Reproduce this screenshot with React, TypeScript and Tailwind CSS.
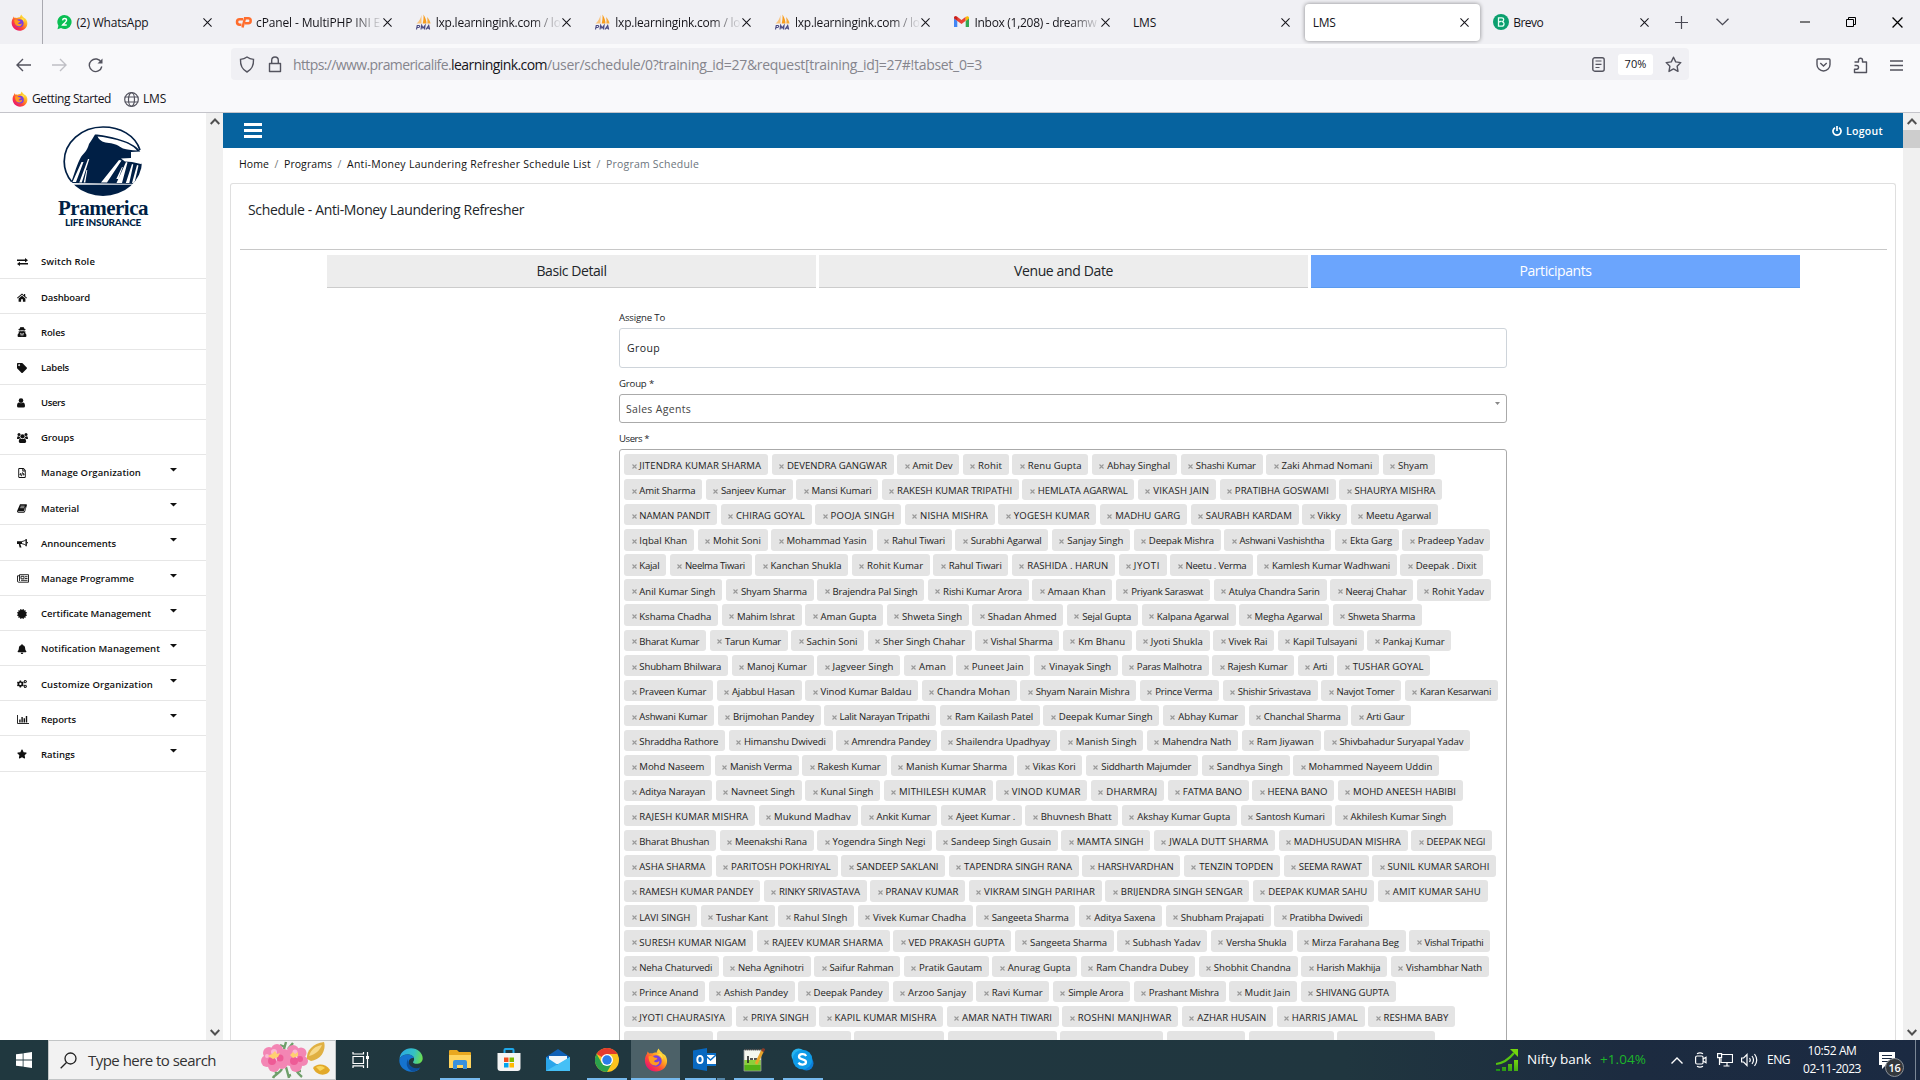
import React, { useLayoutEffect, useRef, useState } from "react";
import { FaUserSecret, FaTag, FaRegFileCode, FaCertificate, FaBell, FaCogs, FaStar } from "react-icons/fa";

/** Single line of text whose tracking is adjusted so that it spans exactly `w` pixels. */
function Fit({ w, children, className = "" }: { w: number; children: string; className?: string }) {
  const ref = useRef<HTMLSpanElement>(null);
  const [ls, setLs] = useState(0);
  useLayoutEffect(() => {
    if (ref.current) setLs((w - ref.current.getBoundingClientRect().width) / children.length);
  }, [w, children]);
  return (
    <span ref={ref} className={`inline-block shrink-0 whitespace-pre ${className}`} style={{ letterSpacing: `${ls}px` }}>
      {children}
    </span>
  );
}

const Firefox = ({ s }: { s: number }) => (
  <svg width={s} height={s} viewBox="0 0 24 24" className="shrink-0">
    <defs>
      <linearGradient id="ffBody" x1="0.85" y1="0.1" x2="0.15" y2="0.9">
        <stop offset="0" stopColor="#fff14a" /><stop offset="0.35" stopColor="#ffa21f" />
        <stop offset="0.65" stopColor="#ff4a37" /><stop offset="1" stopColor="#e81272" />
      </linearGradient>
    </defs>
    <path d="M14.6 0.6c1 2.2 2.6 3.2 4.2 5.1 0.9 0.3 1.8 0.9 2.4 1.6 1.6 2.4 2.1 4.4 1.8 7C22.300 20 17.600 23.500 12 23.500 5.700 23.500 0.900 18.600 0.900 12.500c0-2.700 0.700-5 2.100-6.800l0.600-2.200c0.700 0.500 1.200 1.200 1.500 2 1-0.300 2-0.300 3 0 2.400-1.200 4-1 4.600-0.800 0.200-1.500 0.900-3 1.900-4.100z" fill="url(#ffBody)" />
    <circle cx="12" cy="13" r="5.700" fill="#7a3fe0" />
    <path d="M4.500 8.500c2.500-0.900 4.500-0.500 5.900 0.900 1.300 0.200 3 0.200 3 1.300-0.900 1.400-2.800 1-3.300 2.800 1 1.500 3.700 0.600 5.200-0.600 0.200 3.200-2.400 4.900-5.200 4.400C6.500 16.800 4.600 13 4.500 8.500z" fill="#ff9a20" />
    <path d="M12.500 6.200c3 0.400 5.400 2.600 6 5.600 0.500-2.200-0.200-4.600-1.800-6.100z" fill="#ffe04a" />
  </svg>
);

const WhatsApp = () => (
  <svg width="15" height="16" viewBox="0 0 16 16" className="shrink-0">
    <path d="M8 0.500a7.500 7.500 0 1 1-3.700 14L0.500 15.600l1-3.700A7.500 7.500 0 0 1 8 0.500z" fill="#0abf53" />
    <path d="M5.900 6.200c0.200-1.300 1.200-1.900 2.200-1.900 1.300 0 2.100 0.800 2.100 1.900 0 1.800-2.500 2.500-4.200 5h4.400" fill="none" stroke="#fff" strokeWidth="1.500" />
  </svg>
);

const CPanel = () => (
  <svg width="17" height="12" viewBox="0 0 17 12" className="shrink-0">
    <path d="M8 3.300H4.700a2.700 2.700 0 0 0 0 5.400H6.500" fill="none" stroke="#ff6c2c" strokeWidth="2.500" />
    <path d="M7.500 11.500L10 2.200h3.200a2.400 2.400 0 0 1 0 5H10" fill="none" stroke="#ff6c2c" strokeWidth="2.500" />
  </svg>
);

const Pma = () => (
  <svg width="17" height="16" viewBox="0 0 17 16" className="shrink-0">
    <path d="M6.500 1v8.500H1.500C4 7.500 5.500 5 6.500 1z" fill="#f9c27a" />
    <path d="M8.500 0.500c1.800 2.800 3 6 3 9H7.700c0.800-3 1-6 0.800-9z" fill="#f89c1c" />
    <path d="M12 3c2 2 3.200 4.200 3.500 6.500h-3.200C12.600 7.400 12.500 5 12 3z" fill="#f5a93c" />
    <path d="M1.500 15.500 2.300 11.500h1.600c1.300 0 1 2-0.500 2H2M6 15.500l0.700-4 1.300 2.600 2-2.600-0.500 4M11 15.500l2.700-4 0.900 4M12 14.200h2.300" fill="none" stroke="#4a4a82" strokeWidth="1.200" />
  </svg>
);

const Gmail = () => (
  <svg width="15" height="12" viewBox="0 0 15 12" className="shrink-0">
    <path d="M0 1.500V11h3.300V5z" fill="#4285f4" />
    <path d="M15 1.500V11h-3.300V5z" fill="#34a853" />
    <path d="M0 1.800C0 0.300 1.800-0.300 3.200 0.800L7.500 4l4.200-3.200v3.900L7.500 8 0 2.500z" fill="#ea4335" />
    <path d="M11.700 0.900C13-0.300 15 0.200 15 1.800L14.900 2.600l-3.200 2.300z" fill="#fbbc04" />
    <path d="M0 1.900 3.300 4.500V0.900C1.800-0.200 0 0.300 0 1.900z" fill="#c5221f" />
  </svg>
);

const Brevo = () => (
  <svg width="16" height="16" viewBox="0 0 16 16" className="shrink-0">
    <circle cx="8" cy="8" r="8" fill="#0b9f6e" />
    <path d="M5.500 3.800h3.300c2.500 0 2.500 3.600 0 3.800 3 0 3 4.600-0.300 4.600H5.500zM5.500 8.200l3-1" fill="none" stroke="#e8fff5" strokeWidth="1.300" />
  </svg>
);

const Cross = ({ s = 9, c = "#15141a" }: { s?: number; c?: string }) => (
  <svg width={s} height={s} viewBox="0 0 10 10" className="shrink-0"><path d="M0.500 0.500l9 9M9.500 0.500l-9 9" stroke={c} strokeWidth="1.150" /></svg>
);

const tabs: { icon?: React.ReactNode; text: string; w: number; fade?: boolean; active?: boolean }[] = [
  { icon: <WhatsApp />, text: "(2) WhatsApp", w: 72 },
  { icon: <CPanel />, text: "cPanel - MultiPHP INI E", w: 124, fade: true },
  { icon: <Pma />, text: "lxp.learningink.com / lo", w: 125, fade: true },
  { icon: <Pma />, text: "lxp.learningink.com / lo", w: 125, fade: true },
  { icon: <Pma />, text: "lxp.learningink.com / lo", w: 125, fade: true },
  { icon: <Gmail />, text: "Inbox (1,208) - dreamw", w: 122, fade: true },
  { text: "LMS", w: 23 },
  { text: "LMS", w: 23, active: true },
  { icon: <Brevo />, text: "Brevo", w: 30 },
];

function TabBar() {
  return (
    <div className="flex h-[44px] items-center bg-[#f0f0f4] text-[12px] text-[#15141a]">
      <div className="flex h-full w-[43px] items-center justify-center border-r border-[#a9a9b0] pr-[4px]"><Firefox s={17} /></div>
      <div className="ml-[2.500px] flex h-full">
        {tabs.map((t, i) => (
          <div key={i} className="flex h-full w-[179.600px] items-center px-[2px]">
            <div className={t.active ? "flex h-[37px] w-full items-center rounded-[4px] bg-white pl-[8px] pr-[11px] shadow-[0_0_4px_rgba(0,0,0,0.45)]" : "flex h-[37px] w-full items-center pl-[8px] pr-[11px]"}>
              {t.icon && <span className="mr-[4px] flex w-[17px] shrink-0 items-center justify-center">{t.icon}</span>}
              <span className={t.fade ? "flex min-w-0 flex-1 overflow-hidden pt-px [mask-image:linear-gradient(to_right,black_75%,transparent_100%)]" : "flex min-w-0 flex-1 pt-px"}>
                <Fit w={t.w}>{t.text}</Fit>
              </span>
              <Cross />
            </div>
          </div>
        ))}
      </div>
      <svg width="13" height="13" viewBox="0 0 13 13" className="ml-[13.500px]"><path d="M6.500 0v13M0 6.500h13" stroke="#4a4a55" strokeWidth="1.200" /></svg>
      <svg width="13" height="8" viewBox="0 0 13 8" className="ml-[28px]"><path d="M0.500 0.700l6 6 6-6" fill="none" stroke="#4a4a55" strokeWidth="1.300" /></svg>
      <div className="ml-auto flex items-center pr-[17px]">
        <svg width="10" height="10" viewBox="0 0 10 10"><path d="M0 5h10" stroke="#000" /></svg>
        <svg width="11" height="11" viewBox="0 0 11 11" className="ml-[36px]"><path d="M0.500 2.500h7v7h-7zM2.500 2.500v-2h7v7h-2" fill="none" stroke="#000" /></svg>
        <span className="ml-[35px] flex"><Cross s={11} c="#000" /></span>
      </div>
    </div>
  );
}

const line = { fill: "none", stroke: "#53535e", strokeWidth: 1.4 } as const;

function Toolbar() {
  return (
    <div className="flex h-[42px] items-center bg-[#f9f9fb]">
      <svg width="15" height="14" viewBox="0 0 15 14" className="ml-[16px]"><path d="M15 7H1M7 1L1 7l6 6" {...line} /></svg>
      <svg width="15" height="14" viewBox="0 0 15 14" className="ml-[21px]"><path d="M0 7h14M8 1l6 6-6 6" {...line} stroke="#bfbfc5" /></svg>
      <svg width="15" height="15" viewBox="0 0 15 15" className="ml-[21px]"><path d="M13.300 4.500A6.300 6.300 0 1 0 13.800 8.500" {...line} /><path d="M14.500 0.500v5h-5z" fill="#53535e" /></svg>
      <div className="mb-[6px] ml-[128px] flex h-[32px] w-[1458px] items-center self-end rounded-[4px] bg-[#f0f0f4]">
        <svg width="16" height="17" viewBox="0 0 16 17" className="ml-[8px]"><path d="M8 1c2 1.500 4 2.200 6.500 2.400C14.800 9 13 13.500 8 16 3 13.500 1.200 9 1.500 3.400 4 3.200 6 2.500 8 1z" {...line} /></svg>
        <svg width="14" height="17" viewBox="0 0 14 17" className="ml-[13px]"><path d="M1.500 7.500h11v8h-11zM3.700 7.500V4.300a3.300 3.300 0 0 1 6.600 0v3.200" {...line} strokeLinejoin="round" /></svg>
        <div className="ml-[11px] flex pt-px text-[14px] text-[#85858d]">
          <Fit w={158}>https://www.pramericalife.</Fit>
          <Fit w={96} className="text-[#15141a]">learningink.com</Fit>
          <Fit w={435}>/user/schedule/0?training_id=27&request[training_id]=27#!tabset_0=3</Fit>
        </div>
        <div className="ml-auto mr-[7px] flex items-center">
          <svg width="13" height="15" viewBox="0 0 13 15"><rect x="0.800" y="0.800" width="11.400" height="13.400" rx="2" {...line} /><path d="M3.500 4h6M3.500 7.300h6M3.500 10.500h4" {...line} strokeWidth="1.200" /></svg>
          <div className="ml-[13px] flex h-[21px] w-[35px] items-center justify-center rounded-[3px] bg-white text-[11px] text-[#15141a]"><Fit w={22}>70%</Fit></div>
          <svg width="17" height="17" viewBox="0 0 17 17" className="ml-[12px]"><path d="M8.500 1.200l2.200 4.700 5.100 0.700-3.700 3.600 0.900 5.200-4.500-2.500L4 15.400l0.900-5.200L1.200 6.600l5.100-0.700z" {...line} strokeLinejoin="round" /></svg>
        </div>
      </div>
      <div className="ml-auto flex items-center pr-[17px]">
        <svg width="15" height="14" viewBox="0 0 15 14"><path d="M2 1h11q1 0 1 1v4.500a6.500 6.500 0 0 1-13 0V2q0-1 1-1zM4.300 5l3.200 3 3.200-3" {...line} /></svg>
        <svg width="15" height="17" viewBox="0 0 15 17" className="ml-[22px]"><path d="M1.500 5h4V3.200a2 2 0 0 1 4 0V5h4v10.500H1.500v-3.300h2.200a1.800 1.800 0 0 0 0-3.700H1.500" {...line} strokeLinejoin="round" /></svg>
        <svg width="13" height="11" viewBox="0 0 13 11" className="ml-[22px]"><path d="M0 1h13M0 5.500h13M0 10h13" {...line} /></svg>
      </div>
    </div>
  );
}

function Bookmarks() {
  return (
    <div className="flex h-[27px] items-center border-b border-[#c4c4ca] bg-[#f9f9fb] pl-[12px] text-[12px] text-[#15141a]">
      <Firefox s={16} />
      <span className="ml-[4px] flex"><Fit w={79}>Getting Started</Fit></span>
      <svg width="15" height="15" viewBox="0 0 15 15" className="ml-[13px]"><circle cx="7.500" cy="7.500" r="6.800" {...line} strokeWidth="1.200" /><ellipse cx="7.500" cy="7.500" rx="3" ry="6.800" {...line} strokeWidth="1.200" /><path d="M0.700 5h13.600M0.700 10h13.600" {...line} strokeWidth="1.200" /></svg>
      <span className="ml-[4px] flex"><Fit w={23}>LMS</Fit></span>
    </div>
  );
}

const Exchange = () => (
  <svg width="11" height="8" viewBox="0 0 11 8"><path d="M0 1.500h8V0l3 2.200-3 2.300V3H0zM11 5H3V3.800L0 6l3 2V6.500h8z" fill="#111" /></svg>
);
const House = () => (
  <svg width="10" height="9" viewBox="0 0 10 9"><path d="M5 0.500l2 1.700V1h1.200v2.300L10 4.800l-0.600 0.700L5 1.800 0.600 5.500 0 4.800z" fill="#111" /><path d="M5 2.700l3.400 2.800V8.700H5.900V6.200H4.100v2.500H1.600V5.500z" fill="#111" /></svg>
);
const Person = () => (
  <svg width="8" height="10" viewBox="0 0 8 10"><circle cx="4" cy="2.600" r="2.300" fill="#111" /><path d="M0 8C0 5.500 0.900 4.600 2 4.500q2 1.300 4 0C7.100 4.600 8 5.500 8 8q0 1.600-1.500 1.600h-5Q0 9.600 0 8z" fill="#111" /></svg>
);
const People = () => (
  <svg width="11" height="10" viewBox="0 0 11 10" fill="#111"><circle cx="2" cy="1.600" r="1.500" /><circle cx="9" cy="1.600" r="1.500" /><circle cx="5.500" cy="3.300" r="2.100" /><path d="M0 5.600C0 3.800 0.700 3.300 1.300 3.300l1.800 0.600q-0.100 1.200 0.500 1.700H2.200q-0.700 0.500-0.700 0.500H0.700Q0 6.200 0 5.600zM11 5.600C11 3.800 10.300 3.300 9.700 3.300L7.900 3.900q0.100 1.200-0.500 1.700h1.400q0.700 0.500 0.700 0.500h0.800q0.700 0.100 0.700-0.500zM1.800 8.600C1.800 6.300 2.600 5.500 3.600 5.400q1.900 1.200 3.800 0 1.800 0.200 1.800 3.200 0 1.300-1.300 1.300H3.100Q1.800 9.900 1.800 8.600z" /></svg>
);
const BookIcon = () => (
  <svg width="10" height="9" viewBox="0 0 10 9"><path d="M3 0.300h6.300q0.800 0.200 0.600 1L8.300 7q-0.300 1.700-1.500 1.700H1.200Q-0.200 8.400 0.100 7z" fill="#111" /><path d="M3.600 2.200h4M3.200 3.700h4M1.200 7.500h5.500q0.500 0 0.900-1.300l0.700-2.700" stroke="#fff" strokeWidth="0.600" fill="none" /></svg>
);
const Horn = () => (
  <svg width="11" height="9" viewBox="0 0 11 9"><path d="M0 2.200h5V5H3.300L4.500 8.500H2.600L1.800 5H0z" fill="#111" /><path d="M5 2.500q2.300-0.300 4.200-1.800v5.800Q7.300 5 5 4.700" fill="none" stroke="#111" strokeWidth="0.900" /><path d="M9.200 0v7.300M10.400 3v1.300" stroke="#111" strokeWidth="1" /></svg>
);
const News = () => (
  <svg width="12" height="9" viewBox="0 0 12 9"><path d="M2.500 0.700h9v7.500h-10Q0.500 8.200 0.500 7V1.800h2M2.500 0.700V7" fill="none" stroke="#111" strokeWidth="0.900" /><path d="M4 2.300h3v2.500H4zM8 2.700h2.500M8 4.500h2.500M4 6.300h6.500" fill="none" stroke="#111" strokeWidth="0.900" /></svg>
);
const Bars = () => (
  <svg width="12" height="9" viewBox="0 0 12 9"><path d="M0.500 0v8.500H12" fill="none" stroke="#111" strokeWidth="0.900" /><path d="M2.900 4.500v3M5.100 2v5.500M7.300 3.300v4.200M9.500 1v6.500" stroke="#111" strokeWidth="1.400" /></svg>
);

const menu: [React.ReactNode, string, number, boolean][] = [
  [<Exchange />, "Switch Role", 54, false],
  [<House />, "Dashboard", 49, false],
  [<FaUserSecret />, "Roles", 24, false],
  [<FaTag />, "Labels", 28, false],
  [<Person />, "Users", 24, false],
  [<People />, "Groups", 33, false],
  [<FaRegFileCode />, "Manage Organization", 100, true],
  [<BookIcon />, "Material", 38, true],
  [<Horn />, "Announcements", 75, true],
  [<News />, "Manage Programme", 93, true],
  [<FaCertificate />, "Certificate Management", 110, true],
  [<FaBell />, "Notification Management", 119, true],
  [<FaCogs />, "Customize Organization", 112, true],
  [<Bars />, "Reports", 35, true],
  [<FaStar />, "Ratings", 34, true],
];

const Logo = () => (
  <svg width="80" height="71" viewBox="0 0 80 71">
    <defs><clipPath id="rock"><ellipse cx="40" cy="35.500" rx="39" ry="34.500" /></clipPath></defs>
    <path d="M77 24C72 9 57 1 40 1 18.500 1 1.200 16.500 1.200 35.500c0 7.500 2.700 14.500 7.500 20.200" fill="none" stroke="#001f45" strokeWidth="1.700" />
    <g clipPath="url(#rock)">
      <path d="M8 57C12 46 14 38 18 31c3-4 6-6 8-13 2-3 4-6 6-9.500h2c8 1 14 2 20 4 11 3 19 7 23.500 13l-9.500 0.500v7l11 4v21z" fill="#001f45" />
      <rect x="0" y="58.700" width="80" height="14" fill="#001f45" />
      <path d="M34.500 10.500C42 11 48 12.500 54 14c9 2.500 16 5.500 20 10.500-6-0.200-10-0.800-14-2-5-3-8-5-14-5.500-5-0.500-9-1.500-11.500-6.500z" fill="#fff" />
      <path d="M58 32.500l10-0.500 12 4.500v2l-11-2.500-7-0.500z" fill="#fff" />
      <path d="M56 34l2.500 0.500L44 56.500h-6zM63 36l1.500 0.500L59 57h-5.500zM59 41l0.800 0-4.500 12h-2zM69 38l1.300 0.500-4 18.500h-3.500zM74 39l1.500 0.500-4 17.500h-2.500z" fill="#fff" />
      <path d="M18.500 36l2 0L13 56H9.500zM25 33l1.300 0-7.500 23.500h-2.500zM23.500 44l0.800 0-2 12.500h-1.600z" fill="#fff" />
    </g>
  </svg>
);

const Arrow = ({ up = false }: { up?: boolean }) => (
  <svg width="10" height="7" viewBox="0 0 10 7" className="shrink-0"><path d={up ? "M0.700 6l4.300-4.500L9.300 6" : "M0.700 1l4.300 4.500L9.300 1"} fill="none" stroke="#505050" strokeWidth="1.900" /></svg>
);

function Sidebar() {
  return (
    <>
      <div className="flex w-[206px] shrink-0 flex-col bg-white">
        <div className="flex h-[131px] shrink-0 flex-col items-center pt-[13px] text-[#001f45]">
          <Logo />
          <div className="flex h-[19px] items-center pt-[4px] font-['Liberation_Serif'] text-[21px] font-bold leading-none"><Fit w={90}>Pramerica</Fit></div>
          <div className="flex h-[10px] items-center pt-px font-['Lato'] text-[10px] font-black leading-none"><Fit w={76}>LIFE INSURANCE</Fit></div>
        </div>
        {menu.map(([icon, label, w, sub]) => (
          <div key={label} className="flex h-[35.180px] shrink-0 items-center border-b border-[#e6e6e6] pl-[17px] pt-[3px] text-[#111]">
            <span className="flex w-[24px] pb-px text-[10px]">{icon}</span>
            <span className="flex text-[9.500px] font-semibold"><Fit w={w}>{label}</Fit></span>
            {sub && <svg width="7" height="4" viewBox="0 0 7 4" className="mb-[7px] ml-auto mr-[29px]"><path d="M0 0h7L3.500 3.500z" fill="#111" /></svg>}
          </div>
        ))}
      </div>
      <div className="flex w-[17px] shrink-0 flex-col items-center justify-between bg-[#f0f0f0] py-[4.500px]"><Arrow up /><Arrow /></div>
    </>
  );
}

const rows: [string, number][][] = [
  [["JITENDRA KUMAR SHARMA", 144], ["DEVENDRA GANGWAR", 122], ["Amit Dev", 62], ["Rohit", 46], ["Renu Gupta", 76], ["Abhay Singhal", 85], ["Shashi Kumar", 82], ["Zaki Ahmad Nomani", 113], ["Shyam", 52]],
  [["Amit Sharma", 78], ["Sanjeev Kumar", 87], ["Mansi Kumari", 82], ["RAKESH KUMAR TRIPATHI", 137], ["HEMLATA AGARWAL", 112], ["VIKASH JAIN", 78], ["PRATIBHA GOSWAMI", 116], ["SHAURYA MISHRA", 103]],
  [["NAMAN PANDIT", 93], ["CHIRAG GOYAL", 91], ["POOJA SINGH", 86], ["NISHA MISHRA", 90], ["YOGESH KUMAR", 98], ["MADHU GARG", 87], ["SAURABH KARDAM", 108], ["Vikky", 45], ["Meetu Agarwal", 87]],
  [["Iqbal Khan", 70], ["Mohit Soni", 70], ["Mohammad Yasin", 102], ["Rahul Tiwari", 75], ["Surabhi Agarwal", 93], ["Sanjay Singh", 78], ["Deepak Mishra", 87], ["Ashwani Vashishtha", 107], ["Ekta Garg", 64], ["Pradeep Yadav", 88]],
  [["Kajal", 42], ["Neelma Tiwari", 82], ["Kanchan Shukla", 93], ["Rohit Kumar", 78], ["Rahul Tiwari", 75], ["RASHIDA . HARUN", 103], ["JYOTI", 48], ["Neetu . Verma", 83], ["Kamlesh Kumar Wadhwani", 140], ["Deepak . Dixit", 83]],
  [["Anil Kumar Singh", 98], ["Shyam Sharma", 88], ["Brajendra Pal Singh", 107], ["Rishi Kumar Arora", 101], ["Amaan Khan", 80], ["Priyank Saraswat", 94], ["Atulya Chandra Sarin", 113], ["Neeraj Chahar", 83], ["Rohit Yadav", 74]],
  [["Kshama Chadha", 94], ["Mahim Ishrat", 80], ["Aman Gupta", 78], ["Shweta Singh", 82], ["Shadan Ahmed", 91], ["Sejal Gupta", 71], ["Kalpana Agarwal", 94], ["Megha Agarwal", 90], ["Shweta Sharma", 89]],
  [["Bharat Kumar", 82], ["Tarun Kumar", 78], ["Sachin Soni", 73], ["Sher Singh Chahar", 104], ["Vishal Sharma", 84], ["Km Bhanu", 69], ["Jyoti Shukla", 74], ["Vivek Rai", 61], ["Kapil Tulsayani", 86], ["Pankaj Kumar", 84]],
  [["Shubham Bhilwara", 104], ["Manoj Kumar", 82], ["Jagveer Singh", 83], ["Aman", 49], ["Puneet Jain", 74], ["Vinayak Singh", 84], ["Paras Malhotra", 87], ["Rajesh Kumar", 82], ["Arti", 36], ["TUSHAR GOYAL", 93]],
  [["Praveen Kumar", 89], ["Ajabbul Hasan", 85], ["Vinod Kumar Baldau", 113], ["Chandra Mohan", 95], ["Shyam Narain Mishra", 116], ["Prince Verma", 79], ["Shishir Srivastava", 95], ["Navjot Tomer", 80], ["Karan Kesarwani", 93]],
  [["Ashwani Kumar", 90], ["Brijmohan Pandey", 103], ["Lalit Narayan Tripathi", 112], ["Ram Kailash Patel", 100], ["Deepak Kumar Singh", 116], ["Abhay Kumar", 82], ["Chanchal Sharma", 99], ["Arti Gaur", 60]],
  [["Shraddha Rathore", 101], ["Himanshu Dwivedi", 104], ["Amrendra Pandey", 101], ["Shailendra Upadhyay", 116], ["Manish Singh", 83], ["Mahendra Nath", 91], ["Ram Jiyawan", 79], ["Shivbahadur Suryapal Yadav", 146]],
  [["Mohd Naseem", 87], ["Manish Verma", 84], ["Rakesh Kumar", 85], ["Manish Kumar Sharma", 123], ["Vikas Kori", 65], ["Siddharth Majumder", 112], ["Sandhya Singh", 88], ["Mohammed Nayeem Uddin", 146]],
  [["Aditya Narayan", 88], ["Navneet Singh", 86], ["Kunal Singh", 75], ["MITHILESH KUMAR", 109], ["VINOD KUMAR", 91], ["DHARMRAJ", 73], ["FATMA BANO", 81], ["HEENA BANO", 82], ["MOHD ANEESH HABIBI", 125]],
  [["RAJESH KUMAR MISHRA", 131], ["Mukund Madhav", 99], ["Ankit Kumar", 76], ["Ajeet Kumar .", 81], ["Bhuvnesh Bhatt", 93], ["Akshay Kumar Gupta", 115], ["Santosh Kumari", 91], ["Akhilesh Kumar Singh", 118]],
  [["Bharat Bhushan", 92], ["Meenakshi Rana", 94], ["Yogendra Singh Negi", 115], ["Sandeep Singh Gusain", 122], ["MAMTA SINGH", 89], ["JWALA DUTT SHARMA", 121], ["MADHUSUDAN MISHRA", 129], ["DEEPAK NEGI", 81]],
  [["ASHA SHARMA", 88], ["PARITOSH POKHRIYAL", 122], ["SANDEEP SAKLANI", 104], ["TAPENDRA SINGH RANA", 130], ["HARSHVARDHAN", 98], ["TENZIN TOPDEN", 96], ["SEEMA RAWAT", 85], ["SUNIL KUMAR SAROHI", 124]],
  [["RAMESH KUMAR PANDEY", 136], ["RINKY SRIVASTAVA", 103], ["PRANAV KUMAR", 95], ["VIKRAM SINGH PARIHAR", 133], ["BRIJENDRA SINGH SENGAR", 144], ["DEEPAK KUMAR SAHU", 121], ["AMIT KUMAR SAHU", 110]],
  [["LAVI SINGH", 73], ["Tushar Kant", 74], ["Rahul SIngh", 76], ["Vivek Kumar Chadha", 115], ["Sangeeta Sharma", 99], ["Aditya Saxena", 83], ["Shubham Prajapati", 105], ["Pratibha Dwivedi", 95]],
  [["SURESH KUMAR NIGAM", 129], ["RAJEEV KUMAR SHARMA", 133], ["VED PRAKASH GUPTA", 118], ["Sangeeta Sharma", 99], ["Subhash Yadav", 90], ["Versha Shukla", 82], ["Mirza Farahana Beg", 109], ["Vishal Tripathi", 81]],
  [["Neha Chaturvedi", 95], ["Neha Agnihotri", 88], ["Saifur Rahman", 86], ["Pratik Gautam", 85], ["Anurag Gupta", 85], ["Ram Chandra Dubey", 114], ["Shobhit Chandna", 99], ["Harish Makhija", 86], ["Vishambhar Nath", 98]],
  [["Prince Anand", 81], ["Ashish Pandey", 86], ["Deepak Pandey", 91], ["Arzoo Sanjay", 80], ["Ravi Kumar", 73], ["Simple Arora", 77], ["Prashant Mishra", 92], ["Mudit Jain", 68], ["SHIVANG GUPTA", 95]],
  [["JYOTI CHAURASIYA", 108], ["PRIYA SINGH", 80], ["KAPIL KUMAR MISHRA", 124], ["AMAR NATH TIWARI", 112], ["ROSHNI MANJHWAR", 116], ["AZHAR HUSAIN", 91], ["HARRIS JAMAL", 88], ["RESHMA BABY", 87]],
  [["", 89], ["", 134], ["", 90], ["", 109], ["", 103], ["", 78], ["", 85], ["", 98]],
];

function Chip({ name, w }: { name: string; w: number }) {
  return (
    <div className="flex h-[21.300px] shrink-0 items-center rounded-[3px] bg-[#e4e4e4] pl-[7.500px] pt-[2.600px]" style={{ width: w }}>
      {name && (
        <>
          <svg width="5" height="5" viewBox="0 0 5 5" className="mr-[2.800px] mt-px shrink-0"><path d="M0.500 0.500l4 4M4.500 0.500l-4 4" stroke="#999" strokeWidth="1.100" /></svg>
          <span className="flex text-[9.600px] leading-none text-[#222]"><Fit w={w - 22}>{name}</Fit></span>
        </>
      )}
    </div>
  );
}

function Main() {
  return (
    <div className="flex min-w-0 flex-1 flex-col">
      <div className="flex h-[35px] shrink-0 items-center bg-[#06639f] pl-[21px] pr-[20px] text-white">
        <svg width="18" height="15" viewBox="0 0 18 15"><path d="M0 1.500h18M0 7.500h18M0 13.500h18" stroke="#fff" strokeWidth="2.900" /></svg>
        <svg width="10" height="10" viewBox="0 0 10 10" className="ml-auto"><path d="M3 1.700a4 4 0 1 0 4 0M5 0v5" fill="none" stroke="#fff" strokeWidth="1.700" /></svg>
        <span className="ml-[4px] flex pt-px text-[10.500px] font-semibold leading-none"><Fit w={37}>Logout</Fit></span>
      </div>
      <div className="flex h-[35px] shrink-0 items-center pb-[3px] pl-[16px] text-[10.500px] font-medium leading-none text-[#111]">
        <Fit w={30}>Home</Fit><span className="w-[15px] text-center text-[#777]">/</span>
        <Fit w={48}>Programs</Fit><span className="w-[15px] text-center text-[#777]">/</span>
        <Fit w={244}>Anti-Money Laundering Refresher Schedule List</Fit><span className="w-[15px] text-center text-[#777]">/</span>
        <Fit w={93} className="font-normal text-[#6c757d]">Program Schedule</Fit>
      </div>
      <div className="ml-[7px] mr-[7px] flex min-h-0 flex-1 flex-col overflow-hidden rounded-t-[3px] border border-b-0 border-[#dfdfdf] pl-[9px] pr-[8px]">
        <div className="flex h-[66px] shrink-0 items-start border-b border-[#c8c8c8] pl-[8px] pt-[19px] text-[14px] leading-none text-[#212529]"><Fit w={276}>Schedule - Anti-Money Laundering Refresher</Fit></div>
        <div className="ml-[87px] mt-[5px] flex shrink-0 gap-[3px] text-[14px] leading-none text-[#212529]">
          <div className="flex h-[33px] w-[489px] items-center justify-center border-b border-[#ccc] bg-[#ededed]"><Fit w={70}>Basic Detail</Fit></div>
          <div className="flex h-[33px] w-[489px] items-center justify-center border-b border-[#ccc] bg-[#ededed]"><Fit w={99}>Venue and Date</Fit></div>
          <div className="flex h-[33px] w-[489px] items-center justify-center border-b border-[#5b9bef] bg-[#6ba5fd] text-white"><Fit w={72}>Participants</Fit></div>
        </div>
        <div className="ml-[379px] flex w-[888px] shrink-0 flex-col text-[9.600px] leading-none text-[#212529]">
          <div className="mt-[22px] flex h-[18px] items-start pt-[3px]"><Fit w={46}>Assigne To</Fit></div>
          <div className="flex h-[40px] items-center rounded-[3px] border border-[#ced4da] pl-[7px] text-[10.500px] font-medium"><Fit w={33}>Group</Fit></div>
          <div className="mt-[7px] flex h-[19px] items-center pb-px"><Fit w={35}>Group *</Fit></div>
          <div className="flex h-[29px] items-start justify-between rounded-[3px] border border-[#aaa] pl-[6px] pr-[6px] pt-[9px] text-[10.500px] text-[#444]">
            <Fit w={65}>Sales Agents</Fit>
            <svg width="5" height="3" viewBox="0 0 5 3" className="mt-[-2px]"><path d="M0 0h5L2.500 3z" fill="#888" /></svg>
          </div>
          <div className="mt-[7px] flex h-[19px] items-center pb-[2px]"><Fit w={30}>Users *</Fit></div>
          <div className="flex h-[640px] flex-col gap-[3.790px] rounded-[3px] border border-[#aaa] pl-[4px] pt-[4px]">
            {rows.map((r, i) => (
              <div key={i} className="flex shrink-0 gap-[3.600px]">{r.map(([n, w], j) => <Chip key={j} name={n} w={w} />)}</div>
            ))}
          </div>
        </div>
      </div>
    </div>
  );
}

const Flowers = () => (
  <svg width="74" height="38" viewBox="0 0 74 38">
    <path d="M22 28c-2 4-8 6-9 9M26 26l3 11M34 26c3 5 4 7 8 10M24 8l2-7M28 8l5-6M25 6l-5-2M18 33l-3-2M31 34l-3 1M38 30l3 0" stroke="#6e9f6a" strokeWidth="2.400" fill="none" />
    <g fill="#f386b4"><circle cx="9" cy="12" r="6" /><circle cx="17" cy="9" r="6" /><circle cx="24" cy="14" r="6" /><circle cx="7" cy="20" r="6" /><circle cx="14" cy="25" r="6" /><circle cx="22" cy="22" r="6" /><circle cx="33" cy="10" r="6" /><circle cx="41" cy="12" r="5.500" /><circle cx="43" cy="20" r="5" /><circle cx="36" cy="25" r="6" /><circle cx="30" cy="19" r="6" /></g>
    <g fill="#ee5b96"><circle cx="12" cy="20" r="4" /><circle cx="20" cy="17" r="3.500" /><circle cx="34" cy="20" r="4" /><circle cx="40" cy="18" r="3" /></g>
    <g fill="#fbb7d3"><circle cx="14" cy="11" r="3" /><circle cx="35" cy="11" r="2.500" /><circle cx="7" cy="15" r="2" /></g>
    <path d="M8 15l4-2 3-3 2 3 3-1-2 4-5 2zM30 14l3-3 2 2 3-2 0 4-5 2z" fill="#ffd070" />
    <path d="M47 18c-1-8 6-16 17-17 2 6-1 17-13 19z" fill="#e0b043" /><path d="M49 15c2-7 7-10 13-11-2 5-6 9-13 11z" fill="#f7d98a" />
    <path d="M53 27c3-5 13-5 17 2-2 6-13 7-17-2z" fill="#e2a92a" /><path d="M56 26c4-2 7-1 9 1l-5 3z" fill="#f9d65c" />
  </svg>
);

const Edge = () => (
  <svg width="24" height="24" viewBox="0 0 24 24">
    <defs><linearGradient id="eg" x1="0" y1="0.300" x2="1" y2="0.500"><stop offset="0" stopColor="#2aa9e6" /><stop offset="0.600" stopColor="#35c1c4" /><stop offset="1" stopColor="#6ade50" /></linearGradient></defs>
    <path d="M0.500 11C1 4.500 6 0.300 12 0.300c6.500 0 11.700 4.700 11.700 9.900 0 4-3.200 5.600-6 5.600-2.400 0-3.700-0.800-3.700-1.600 0-0.700 1.100-1.300 1.100-3C15.100 8 12 6.500 8.500 6.500 4.500 6.500 1.700 8.500 0.500 11z" fill="url(#eg)" />
    <path d="M0.300 12C1 8.500 5 6.300 9 6.500c3 0.200 5.500 1.500 6 3.500-6-1-8 7-1 11 2 1.200 5 1.200 7.500-1-2 2.600-5.500 4-9 3.800C5.500 23.400 0 18.500 0.300 12z" fill="#1573cf" />
    <path d="M9 11c-3 5-0.500 11.500 5.500 12.600 3-0.500 5.500-2 7-4.300-7 3-13-2-12.500-8.300z" fill="#0d4f9c" />
  </svg>
);
const Folder = () => (
  <svg width="22" height="19" viewBox="0 0 22 19"><path d="M0 1q0-1 1-1h7l2 2h11q1 0 1 1v14H0z" fill="#e9a820" /><path d="M0 5h22v13H0z" fill="#ffd45e" /><path d="M4 19v-7q0-2 2-2h10q2 0 2 2v7h-4v-4H8v4z" fill="#3790dd" /></svg>
);
const Store = () => (
  <svg width="24" height="24" viewBox="0 0 24 24"><path d="M7.500 6V2q0-1 1-1h7q1 0 1 1v4" fill="none" stroke="#1fa8ea" strokeWidth="2" /><path d="M0.500 5h23v15q0 3-3 3h-17q-3 0-3-3z" fill="#f4f4f4" /><path d="M7 9.500h4.500V14H7z" fill="#f04e1f" /><path d="M12.500 9.500H17V14h-4.500z" fill="#7fba00" /><path d="M7 15h4.500v4.500H7z" fill="#00a4ef" /><path d="M12.500 15H17v4.500h-4.500z" fill="#ffb900" /></svg>
);
const Mail = () => (
  <svg width="24" height="22" viewBox="0 0 24 22"><path d="M0 8l12-8 12 8v4H0z" fill="#0f60b6" /><path d="M3 7h18v8H3z" fill="#f2f6fa" /><path d="M0 8l12 8 12-8v14H0z" fill="#2aa5ea" /><path d="M0 22L24 8v14z" fill="#45c0f6" /></svg>
);
const Chrome = () => (
  <svg width="24" height="24" viewBox="0 0 24 24"><circle cx="12" cy="12" r="12" fill="#fcc31e" /><path d="M12 12L1.600 6A12 12 0 0 1 22.400 6H12z" fill="#e33b2e" /><path d="M1.600 6A12 12 0 0 0 12 24l5.200-9L12 12 6.800 15z" fill="#2ba24c" /><circle cx="12" cy="12" r="6" fill="#fff" /><circle cx="12" cy="12" r="4.700" fill="#2a7de8" /></svg>
);
const Outlook = () => (
  <svg width="23" height="23" viewBox="0 0 23 23"><path d="M11 5h12v13H11z" fill="#0a6fc8" /><path d="M12 7h11v9H12z" fill="#fff" /><path d="M12 7l5.500 5L23 7" fill="none" stroke="#0a6fc8" strokeWidth="1.500" /><path d="M0 2.500L14 0v23L0 20.500z" fill="#0868c0" /><ellipse cx="7" cy="11.500" rx="2.700" ry="3.600" fill="none" stroke="#fff" strokeWidth="1.900" /></svg>
);
const Npp = () => (
  <svg width="22" height="24" viewBox="0 0 22 24"><path d="M1 2h17v21H1z" fill="#f5f7ef" /><path d="M1 12h17v11H1z" fill="#8bd03c" /><path d="M1 17h17v6H1z" fill="#54b216" /><path d="M1 2h17v21H1z" fill="none" stroke="#999" strokeWidth="0.800" /><path d="M2 1.500h15" stroke="#444" strokeWidth="1.500" strokeDasharray="1 1" /><path d="M5 8v7M7 11h3M11 11h3" stroke="#222" strokeWidth="1.600" /><path d="M20 2l-7 14" stroke="#e8a32a" strokeWidth="2.800" /><path d="M21 0.500l-1.500 3" stroke="#8a3a2a" strokeWidth="2.800" /></svg>
);
const Skype = () => (
  <svg width="23" height="23" viewBox="0 0 23 23"><circle cx="7.500" cy="7.500" r="7" fill="#28b4f0" /><circle cx="15.500" cy="15.500" r="7" fill="#0c7dd8" /><circle cx="11.500" cy="11.500" r="9.800" fill="#0f9be8" /><path d="M15.200 8C13.500 5.300 8 5.700 8 8.800c0 3.500 7 1.800 7 5.200 0 3.200-6 3.400-7.500 0.600" fill="none" stroke="#fff" strokeWidth="2.300" /></svg>
);

const apps: [React.ReactNode, string][] = [
  [<Edge />, ""], [<Folder />, "on"], [<Store />, ""], [<Mail />, ""], [<Chrome />, "on"],
  [<Firefox s={24} />, "active"], [<Outlook />, "multi"], [<Npp />, "on"], [<Skype />, "on"],
];

const tray = { fill: "none", stroke: "#fff", strokeWidth: 1.2 } as const;

function Taskbar() {
  return (
    <div className="flex h-[40px] shrink-0 items-center bg-[linear-gradient(to_right,#20383f_0%,#20363f_70%,#1c2b40_85%,#1b2a42_100%)] text-white">
      <div className="flex w-[48px] justify-center">
        <svg width="16" height="16" viewBox="0 0 16 16" fill="#fff"><path d="M0 2.300L6.700 1.400v6.200H0zM7.500 1.300L16 0v7.600H7.500zM0 8.400h6.700v6.200L0 13.700zM7.500 8.400H16V16l-8.500-1.200z" /></svg>
      </div>
      <div className="flex h-full w-[288px] items-center border border-[#c2c5c6] bg-[#f2f2f2] pl-[11px] pr-px">
        <svg width="17" height="17" viewBox="0 0 17 17"><circle cx="10.500" cy="6.500" r="5.500" fill="none" stroke="#222" strokeWidth="1.300" /><path d="M6.500 10.500L0.700 16.300" stroke="#222" strokeWidth="1.300" /></svg>
        <span className="ml-[11px] flex flex-1 text-[15px] leading-none text-[#333]"><Fit w={128}>Type here to search</Fit></span>
        <Flowers />
      </div>
      <div className="flex w-[50px] justify-center pr-[2px]">
        <svg width="17" height="16" viewBox="0 0 17 16"><path d="M1 4.500h10.500v7H1zM1 0v2h10.500V0M1 16v-2.200h10.500V16M15.500 0v16" {...tray} /><path d="M14 4h3v3h-3z" fill="#fff" /></svg>
      </div>
      {apps.map(([icon, state], i) => (
        <div key={i} className={state === "active" ? "flex h-full w-[49px] flex-col items-center bg-[#4c6168]" : "flex h-full w-[49px] flex-col items-center"}>
          <div className="flex h-[38px] items-center pt-[1px]">{icon}</div>
          {state === "on" && <div className="h-[2px] w-[40px] bg-[#76b9ed]" />}
          {state === "active" && <div className="h-[2px] w-full bg-[#76b9ed]" />}
          {state === "multi" && <div className="flex h-[2px] w-[40px]"><div className="w-[31px] bg-[#76b9ed]" /><div className="ml-px w-[8px] bg-[#5586a8]" /></div>}
        </div>
      ))}
      <div className="ml-auto flex h-full items-center">
        <svg width="22" height="22" viewBox="0 0 22 22"><defs><linearGradient id="ng" x1="0" y1="1" x2="1" y2="0"><stop offset="0" stopColor="#178a17" /><stop offset="1" stopColor="#7ad80e" /></linearGradient></defs><path d="M0 20h4v2H0zM6 18h4v4H6zM12 15h4v7h-4zM18 11h4v11h-4z" fill="url(#ng)" /><path d="M0 15C8 14 14 9 18 4" fill="none" stroke="#57c411" strokeWidth="2.200" /><path d="M14 0h8v8z" fill="#74d60e" /></svg>
        <span className="ml-[9px] flex text-[13.500px] leading-none"><Fit w={64}>Nifty bank</Fit></span>
        <span className="ml-[9px] flex text-[13.500px] leading-none text-[#1cb52a]"><Fit w={46}>+1.04%</Fit></span>
        <div className="ml-[19px] flex w-[24px] justify-center"><svg width="12" height="7" viewBox="0 0 12 7"><path d="M0.500 6.500L6 1l5.500 5.500" {...tray} strokeWidth="1.400" /></svg></div>
        <div className="flex w-[24px] justify-center"><svg width="12" height="16" viewBox="0 0 12 16"><rect x="0.600" y="4" width="7.500" height="8" rx="1.500" {...tray} /><path d="M8 7l3-1.700v5.400L8 9M2 1.800Q5 0 8 1.800M2 14.200Q5 16 8 14.200" {...tray} /></svg></div>
        <div className="flex w-[24px] justify-center"><svg width="16" height="14" viewBox="0 0 16 14"><path d="M5 1.500h10.500v8H4v-4M10 9.500V13M6.500 13h6M0.600 0.600h4v4h-4zM2.500 4.500V12" {...tray} /></svg></div>
        <div className="flex w-[24px] justify-center"><svg width="17" height="14" viewBox="0 0 17 14"><path d="M0.600 5h2L6 1.500v11L2.600 9h-2zM8.500 5q1.500 2 0 4M11 3q3 4 0 8M13.500 1q4.500 6 0 12" {...tray} /></svg></div>
        <span className="ml-[6px] flex text-[12px] leading-none"><Fit w={23}>ENG</Fit></span>
        <div className="ml-[13px] flex w-[58px] flex-col items-center gap-[6px] text-[12px] leading-[12px]"><Fit w={49}>10:52 AM</Fit><Fit w={58}>02-11-2023</Fit></div>
        <div className="relative ml-[18px] flex w-[16px]">
          <svg width="16" height="17" viewBox="0 0 16 17"><path d="M0 0h16v13H7l-4 4v-4H0z" fill="#fff" /><path d="M3 3.500h10M3 6.500h10M3 9.500h6" stroke="#1b2a42" strokeWidth="1.200" /></svg>
          <div className="absolute left-[6px] top-[6px] flex size-[19px] items-center justify-center rounded-full border border-[#8a8f96] bg-[#33383d] text-[11px] font-semibold leading-none"><Fit w={12}>16</Fit></div>
        </div>
        <div className="ml-[20px] mr-[4px] h-full w-px bg-[#7b8796]" />
      </div>
    </div>
  );
}

export default function App() {
  return (
    <div className="flex h-[1080px] w-[1920px] flex-col overflow-hidden bg-white font-['Open_Sans','Noto_Sans',sans-serif]">
      <TabBar />
      <Toolbar />
      <Bookmarks />
      <div className="flex min-h-0 flex-1 overflow-hidden">
        <Sidebar />
        <Main />
        <div className="flex w-[17px] shrink-0 flex-col items-center bg-[#f0f0f0] pb-[4.500px]">
          <div className="flex h-[17px] items-center"><Arrow up /></div>
          <div className="h-[18px] w-full bg-[#cdcdcd]" />
          <div className="mt-auto flex"><Arrow /></div>
        </div>
      </div>
      <Taskbar />
    </div>
  );
}
